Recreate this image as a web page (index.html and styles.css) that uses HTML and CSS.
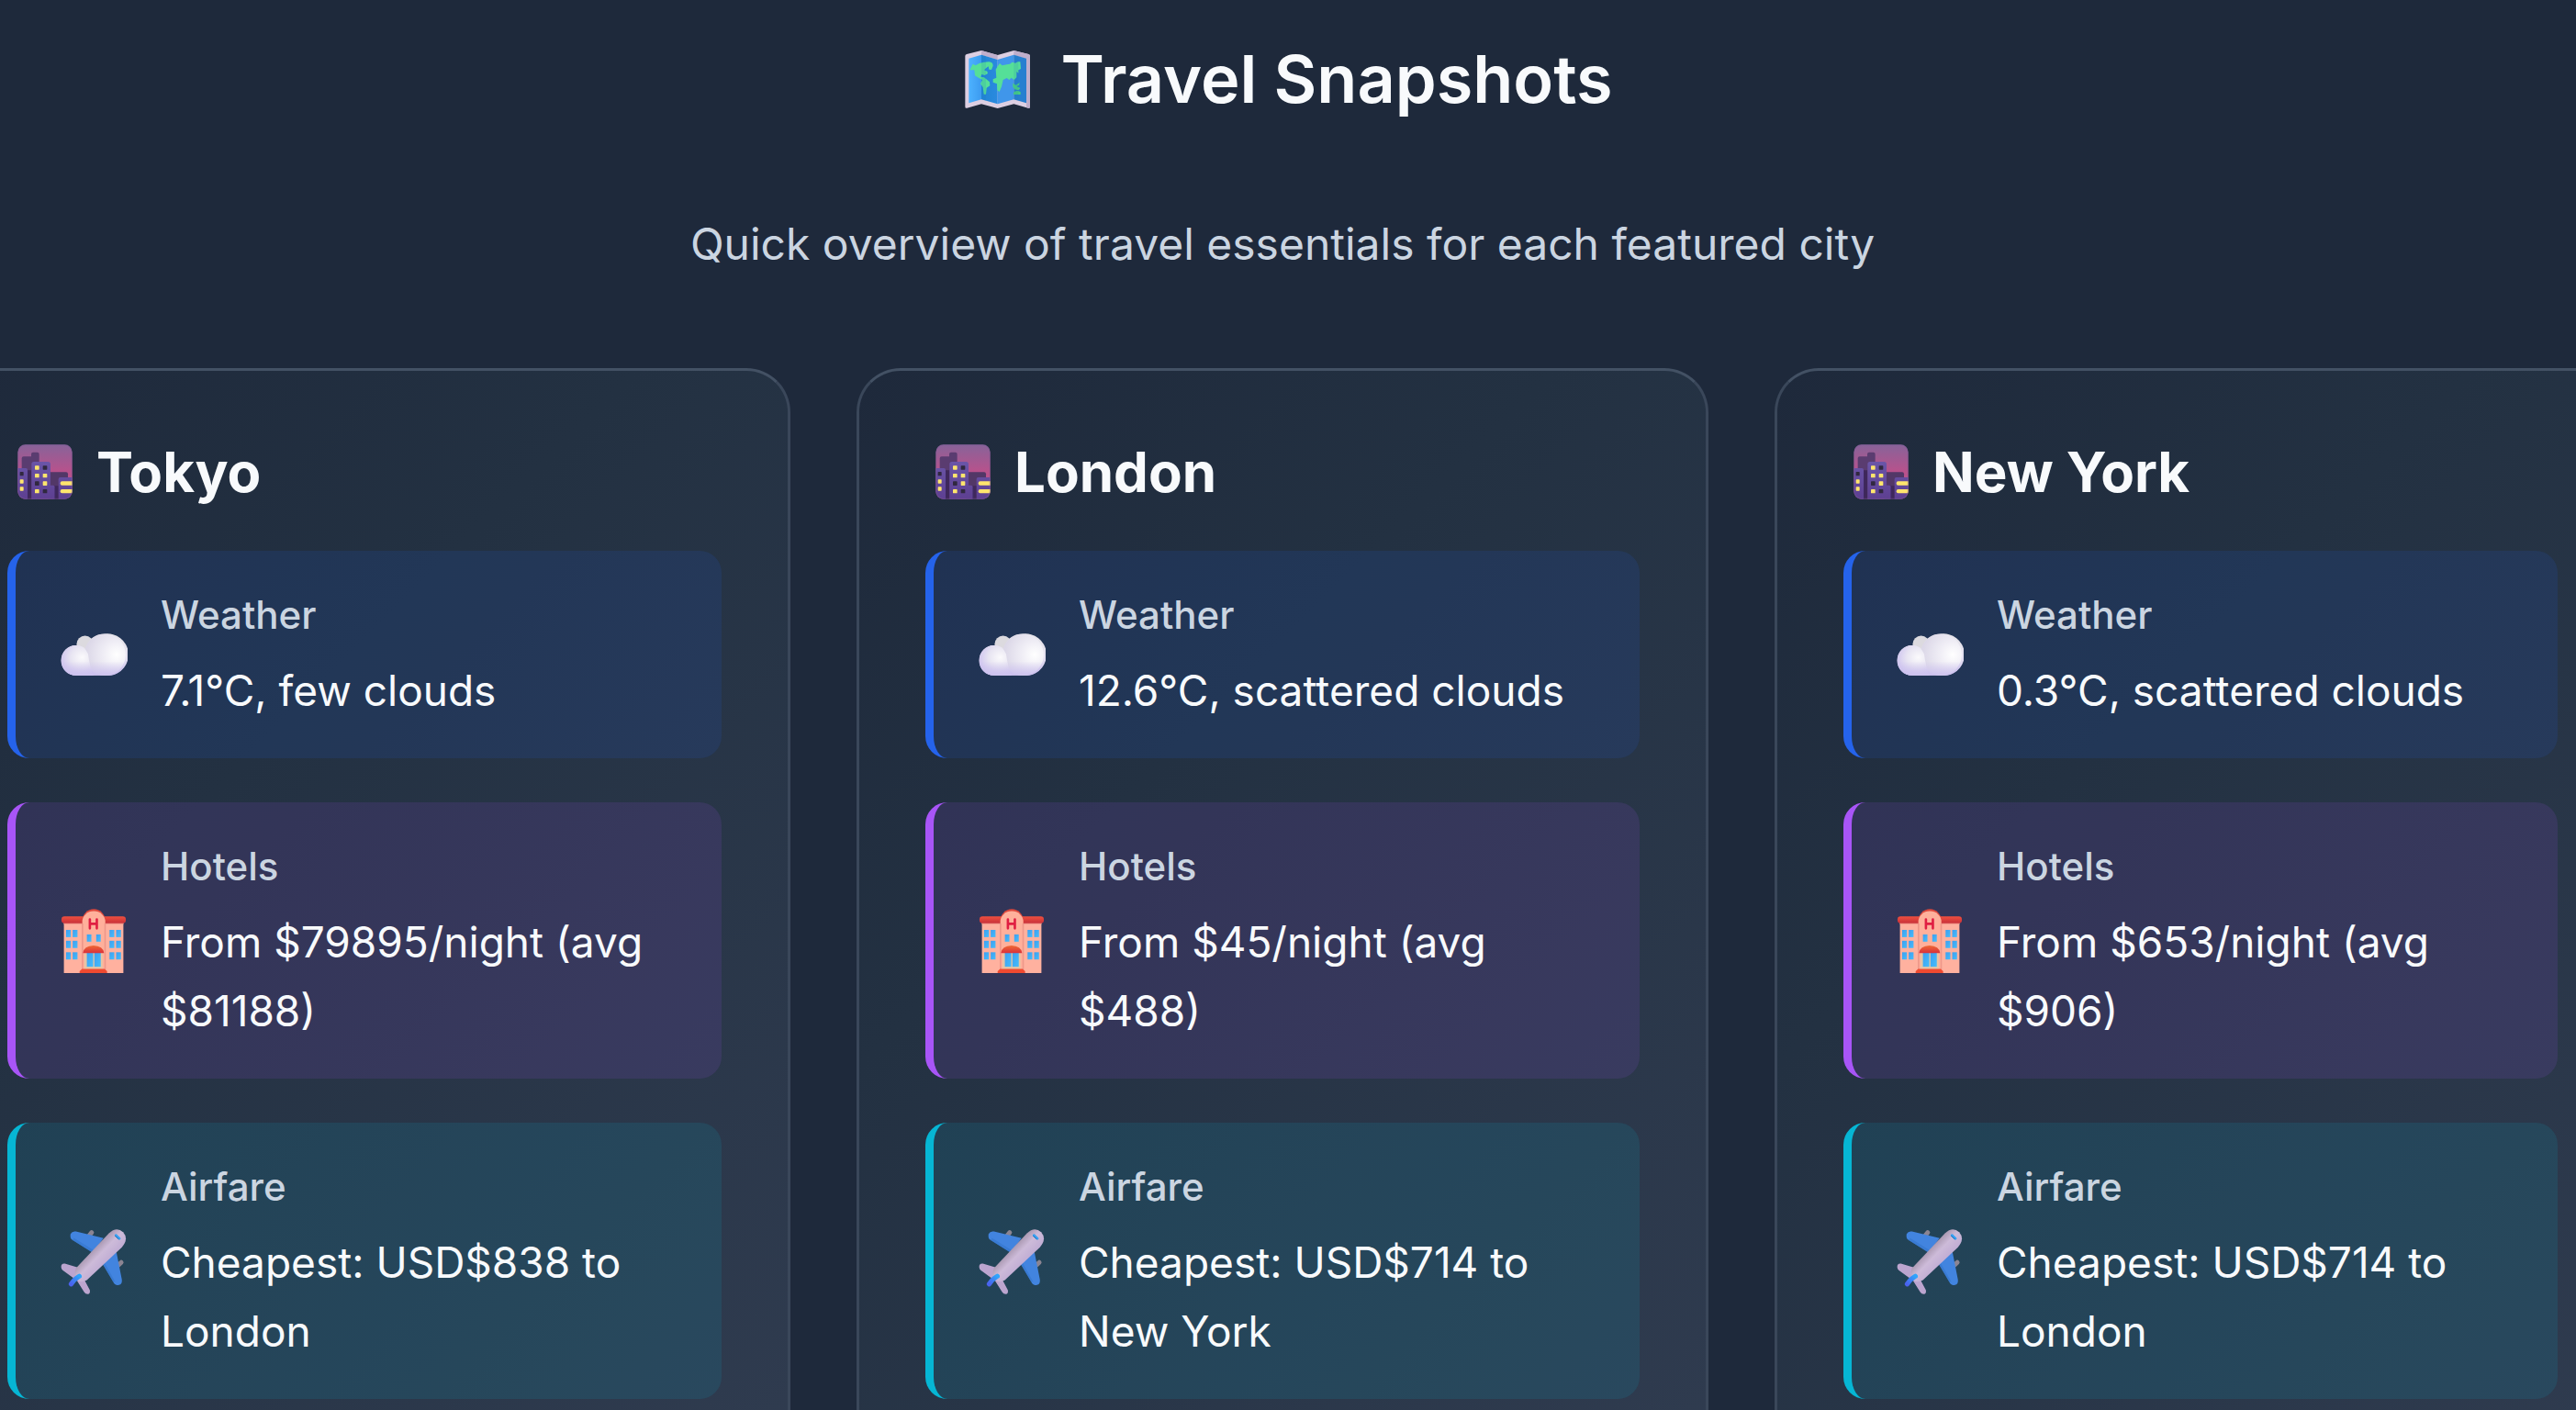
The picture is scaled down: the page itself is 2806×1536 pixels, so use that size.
FILE: index.html
```
<!DOCTYPE html>
<html lang="en">
<head>
    <meta charset="UTF-8">
    <meta name="viewport" content="width=device-width, initial-scale=1.0">
    <title>Travel Snapshots</title>
    <link rel="stylesheet" href="styles.css">
</head>
<body>
    <!-- Shared icons -->
    <svg class="icon-defs" aria-hidden="true">
        <defs>
            <linearGradient id="map-a" x1="0" y1="0" x2="1" y2="0">
                <stop offset="0" stop-color="#4db2ff"/>
                <stop offset="1" stop-color="#3c9bf0"/>
            </linearGradient>
            <linearGradient id="map-b" x1="0" y1="0" x2="1" y2="0">
                <stop offset="0" stop-color="#2185d4"/>
                <stop offset="1" stop-color="#2a8adf"/>
            </linearGradient>
            <linearGradient id="sky" x1="0" y1="0" x2="0" y2="1">
                <stop offset="0" stop-color="#876399"/>
                <stop offset="0.5" stop-color="#b8528c"/>
                <stop offset="1" stop-color="#c04f8a"/>
            </linearGradient>
            <linearGradient id="tower" x1="0" y1="0" x2="0" y2="1">
                <stop offset="0" stop-color="#6a55a8"/>
                <stop offset="1" stop-color="#5d3f91"/>
            </linearGradient>
            <linearGradient id="cloud-base" x1="0" y1="0" x2="0" y2="1">
                <stop offset="0" stop-color="#e6e4e8"/>
                <stop offset="0.55" stop-color="#e5e1f1"/>
                <stop offset="1" stop-color="#cdc2ef"/>
            </linearGradient>
            <radialGradient id="cloud-big" cx="0.78" cy="0.5" r="0.72">
                <stop offset="0" stop-color="#ffffff"/>
                <stop offset="0.45" stop-color="#efedf5"/>
                <stop offset="1" stop-color="#dcd8e8"/>
            </radialGradient>
            <radialGradient id="cloud-small" cx="0.65" cy="0.4" r="0.7">
                <stop offset="0" stop-color="#fbfafc"/>
                <stop offset="0.5" stop-color="#e8e5f2"/>
                <stop offset="1" stop-color="#cdc2ef"/>
            </radialGradient>
            <linearGradient id="cloud-shade" x1="0" y1="0" x2="0" y2="1">
                <stop offset="0" stop-color="#cdc2ef" stop-opacity="0"/>
                <stop offset="1" stop-color="#cdc2ef"/>
            </linearGradient>
            <linearGradient id="roof" x1="0" y1="0" x2="0" y2="1">
                <stop offset="0" stop-color="#f0503e"/>
                <stop offset="1" stop-color="#c8303a"/>
            </linearGradient>
            <linearGradient id="glass" x1="0" y1="0" x2="1" y2="1">
                <stop offset="0" stop-color="#3d9ef0"/>
                <stop offset="1" stop-color="#45bdfb"/>
            </linearGradient>
            <linearGradient id="awning" x1="0" y1="0" x2="0" y2="1">
                <stop offset="0" stop-color="#ef6a35"/>
                <stop offset="1" stop-color="#d92f3c"/>
            </linearGradient>
            <linearGradient id="body" x1="0.35" y1="0.35" x2="0.65" y2="0.65">
                <stop offset="0" stop-color="#a493ab"/>
                <stop offset="0.45" stop-color="#cdbbd9"/>
                <stop offset="1" stop-color="#bfabd3"/>
            </linearGradient>
            <linearGradient id="tail" x1="1" y1="0" x2="0" y2="1">
                <stop offset="0" stop-color="#2fa5fb"/>
                <stop offset="1" stop-color="#4a62ee"/>
            </linearGradient>
        </defs>

        <symbol id="icon-map" viewBox="0 15 216 216">
            <path fill="#ddcfe2" d="M4 48Q4 43 9 42L57 30 110 45 163 30 211 42Q216 43 216 48V214Q216 220 210 218L163 205 110 219 57 205 10 218Q4 220 4 214Z"/>
            <path fill="#bfaecb" d="M57 30 110 45V60L57 45ZM163 30 211 42Q216 43 216 48V214Q216 220 210 218L204 216V57L163 45Z"/>
            <path fill="url(#map-a)" d="M16 56 57 44V190L16 202Z"/>
            <path fill="url(#map-b)" d="M57 44 110 60V205L57 190Z"/>
            <path fill="#4096ea" d="M110 60 163 44V190L110 205Z"/>
            <path fill="#277fd0" d="M163 44 204 56V202L163 190Z"/>
            <path fill="#55df98" d="M19 94 29 74 38 79 50 72 66 68 82 67Q95 68 95 80L90 93 82 92 80 82 72 88 66 94 76 98 78 105 68 111 58 108 54 116 66 118 84 133 85 145 74 152 72 173H65L62 150 54 139 60 126 45 118 36 112 34 94 26 94Z"/>
            <path fill="#55df98" d="M110 82 117 72 125 79 140 76 150 74 158 68 168 71 176 67 184 67 186 90 178 94 178 104 172 99 172 118 164 126 155 119 148 126 140 120 128 126 123 148 116 165 109 160 108 139 95 134 95 124 106 119 104 92Z"/>
            <path fill="#47ce82" d="M160 137 170 143 182 135 180 143 172 147 184 153 178 160 166 157 160 149ZM162 167Q172 157 185 166V174H162Z"/>
            <path fill="#1c6fbe" opacity="0.14" d="M57 44 72 49V194L57 190ZM163 44 178 48V194L163 190Z"/>
        </symbol>

        <symbol id="icon-city" viewBox="0 0 180 180">
            <clipPath id="city-clip"><rect x="1" y="1" width="178" height="178" rx="25"/></clipPath>
            <g clip-path="url(#city-clip)">
                <rect width="180" height="180" fill="url(#sky)"/>
                <path fill="#5a3c70" d="M14 46Q14 40 20 40H45V32Q45 26 51 26H65Q71 26 71 32V180H14Z"/>
                <path fill="#523767" d="M100 91H159Q165 91 165 97V180H100Z"/>
                <path fill="#3f285a" d="M33 85H46V180H30ZM120 136H136V180H118Z"/>
                <path fill="url(#tower)" d="M0 78H27Q33 78 33 84V180H0ZM46 65Q46 57 54 57H100Q108 57 108 65V134H116Q122 134 122 140V180H46ZM134 114Q134 108 140 108H180V180H134Z"/>
                <path fill="#3d2a63" d="M33 84 37 92V180H33ZM122 140 127 148V180H122Z" opacity="0.7"/>
                <g fill="#ffe56d">
                    <rect x="8" y="115" width="12" height="13" rx="2"/><rect x="8" y="139" width="12" height="13" rx="2"/>
                    <rect x="57" y="70" width="14" height="13" rx="2"/><rect x="57" y="96" width="14" height="13" rx="2"/>
                    <rect x="83" y="96" width="14" height="13" rx="2"/><rect x="83" y="121" width="14" height="14" rx="2"/>
                    <rect x="57" y="147" width="14" height="13" rx="2"/>
                    <rect x="140" y="121" width="46" height="13" rx="6"/><rect x="140" y="147" width="46" height="13" rx="6"/>
                </g>
                <g fill="#30283f">
                    <rect x="8" y="90" width="12" height="13" rx="2"/><rect x="83" y="70" width="14" height="13" rx="2"/>
                    <rect x="57" y="121" width="14" height="14" rx="2"/><rect x="83" y="147" width="14" height="13" rx="2"/>
                </g>
                <rect x="2" y="2" width="176" height="176" rx="24" fill="none" stroke="#7b5b98" stroke-width="4" opacity="0.4"/>
            </g>
        </symbol>

        <symbol id="icon-cloud" viewBox="0 0 225 225">
            <circle cx="84" cy="78" r="28" fill="#dcdadf"/>
            <path fill="url(#cloud-base)" d="M53 182A48 50 0 0 1 53 82Q76 82 88 96 98 44 150 44A69 69 0 0 1 167 182Z"/>
            <circle cx="150" cy="113" r="69" fill="url(#cloud-big)"/>
            <path fill="url(#cloud-small)" d="M54 182A49 50 0 0 1 54 82Q82 82 94 110 99 150 112 182Z"/>
            <path fill="url(#cloud-shade)" d="M5 135H217Q205 182 160 182H54Q12 180 5 135Z"/>
        </symbol>

        <symbol id="icon-hotel" viewBox="0 0 225 225">
            <path fill="#ffb19f" d="M14 40H211V219H14Z"/>
            <path fill="#f39a8c" d="M14 50H211V58H14Z"/>
            <rect x="6" y="31" width="213" height="23" rx="10" fill="url(#roof)"/>
            <path fill="#dd493d" d="M75 55V45A38 38 0 0 1 151 45V55Z"/>
            <path fill="#ffb09b" d="M75 219V48A38 34 0 0 1 151 48V219Z"/>
            <path fill="#e2897f" opacity="0.6" d="M73 55H78V208H73ZM148 55H153V208H148Z"/>
            <path fill="none" stroke="#e01e42" stroke-width="8" stroke-linecap="round" d="M100 41V71M123 41V71M100 56H123"/>
            <g fill="url(#glass)">
                <rect x="21" y="76" width="16" height="24"/><rect x="43" y="76" width="16" height="24"/>
                <rect x="165" y="76" width="16" height="24"/><rect x="187" y="76" width="16" height="24"/>
                <rect x="21" y="112" width="16" height="24"/><rect x="43" y="112" width="16" height="24"/>
                <rect x="165" y="112" width="16" height="24"/><rect x="187" y="112" width="16" height="24"/>
                <rect x="21" y="150" width="16" height="24"/><rect x="43" y="150" width="16" height="24"/>
                <rect x="165" y="150" width="16" height="24"/><rect x="187" y="150" width="16" height="24"/>
                <rect x="90" y="91" width="15" height="24"/><rect x="121" y="91" width="15" height="24"/>
            </g>
            <rect x="82" y="148" width="60" height="58" fill="#e6c5a5"/>
            <rect x="90" y="148" width="21" height="50" fill="url(#glass)"/>
            <rect x="115" y="148" width="21" height="50" fill="url(#glass)"/>
            <path fill="url(#awning)" d="M77 153Q80 129 112 128 144 129 147 153Z"/>
            <path fill="#f04a30" d="M66 219V213L74 205H149L157 213V219Z"/>
        </symbol>

        <symbol id="icon-plane" viewBox="0 0 225 225">
            <path fill="none" stroke="#8b8492" stroke-width="15" stroke-linecap="round" d="M97 28 106 17M195 125 204 116"/>
            <path fill="#4284df" d="M36 22Q42 11 54 14L145 36 110 84 42 42Q33 36 36 22ZM188 82 206 173Q208 188 196 191 183 194 177 180L141 119Z"/>
            <path fill="#3475cb" opacity="0.6" d="M42 42 110 84 114 77 48 36ZM141 119 177 180 184 180 146 113Z"/>
            <path fill="#bca5cf" d="M5 132Q4 119 17 120L68 135 80 170 100 208Q102 220 93 221 85 221 81 214L57 176 10 142Q6 139 5 132Z"/>
            <path fill="url(#body)" d="M54 135 163 20Q188-4 210 16 230 38 206 66L90 175Q70 186 57 174 45 158 54 135Z"/>
            <path fill="none" stroke="#36a0f2" stroke-width="8" stroke-linecap="round" d="M186 26 198 37"/>
            <path fill="none" stroke="#1d70b8" stroke-width="3" stroke-linecap="round" d="M184 29 195 39"/>
            <path fill="none" stroke="url(#tail)" stroke-width="16" stroke-linecap="round" d="M65 162Q50 170 38 188"/>
        </symbol>
    </svg>

    <section class="snapshots">
        <header class="section-header">
            <h1><svg class="title-icon" aria-hidden="true"><use href="#icon-map"/></svg>Travel Snapshots</h1>
            <p>Quick overview of travel essentials for each featured city</p>
        </header>

        <div class="city-grid">
            <article class="city-card">
                <h2><svg class="city-icon" aria-hidden="true"><use href="#icon-city"/></svg>Tokyo</h2>
                <div class="info-item weather">
                    <svg class="info-icon" aria-hidden="true"><use href="#icon-cloud"/></svg>
                    <div class="info-text">
                        <h3>Weather</h3>
                        <p>7.1°C, few clouds</p>
                    </div>
                </div>
                <div class="info-item hotels">
                    <svg class="info-icon" aria-hidden="true"><use href="#icon-hotel"/></svg>
                    <div class="info-text">
                        <h3>Hotels</h3>
                        <p>From $79895/night (avg $81188)</p>
                    </div>
                </div>
                <div class="info-item airfare">
                    <svg class="info-icon" aria-hidden="true"><use href="#icon-plane"/></svg>
                    <div class="info-text">
                        <h3>Airfare</h3>
                        <p>Cheapest: USD$838 to London</p>
                    </div>
                </div>
            </article>

            <article class="city-card">
                <h2><svg class="city-icon" aria-hidden="true"><use href="#icon-city"/></svg>London</h2>
                <div class="info-item weather">
                    <svg class="info-icon" aria-hidden="true"><use href="#icon-cloud"/></svg>
                    <div class="info-text">
                        <h3>Weather</h3>
                        <p>12.6°C, scattered clouds</p>
                    </div>
                </div>
                <div class="info-item hotels">
                    <svg class="info-icon" aria-hidden="true"><use href="#icon-hotel"/></svg>
                    <div class="info-text">
                        <h3>Hotels</h3>
                        <p>From $45/night (avg $488)</p>
                    </div>
                </div>
                <div class="info-item airfare">
                    <svg class="info-icon" aria-hidden="true"><use href="#icon-plane"/></svg>
                    <div class="info-text">
                        <h3>Airfare</h3>
                        <p>Cheapest: USD$714 to New York</p>
                    </div>
                </div>
            </article>

            <article class="city-card">
                <h2><svg class="city-icon" aria-hidden="true"><use href="#icon-city"/></svg>New York</h2>
                <div class="info-item weather">
                    <svg class="info-icon" aria-hidden="true"><use href="#icon-cloud"/></svg>
                    <div class="info-text">
                        <h3>Weather</h3>
                        <p>0.3°C, scattered clouds</p>
                    </div>
                </div>
                <div class="info-item hotels">
                    <svg class="info-icon" aria-hidden="true"><use href="#icon-hotel"/></svg>
                    <div class="info-text">
                        <h3>Hotels</h3>
                        <p>From $653/night (avg $906)</p>
                    </div>
                </div>
                <div class="info-item airfare">
                    <svg class="info-icon" aria-hidden="true"><use href="#icon-plane"/></svg>
                    <div class="info-text">
                        <h3>Airfare</h3>
                        <p>Cheapest: USD$714 to London</p>
                    </div>
                </div>
            </article>
        </div>
    </section>
</body>
</html>
```

FILE: styles.css
```
* {
    margin: 0;
    padding: 0;
    box-sizing: border-box;
}

body {
    font-family: Inter, "Liberation Sans", sans-serif;
    background-color: #1e293b;
    color: #f8fafc;
    height: 100vh;
    overflow: hidden;
}

.icon-defs {
    position: absolute;
    width: 0;
    height: 0;
}

/* The row of cards runs past both edges of the window */
.snapshots {
    margin: 0 -55px 0 -67px;
    padding-top: 28px;
}

.section-header {
    text-align: center;
    margin-bottom: 97px;
}

.section-header h1 {
    display: flex;
    align-items: center;
    justify-content: center;
    gap: 34px;
    padding-left: 12px;
    font-size: 72px;
    font-weight: 600;
    line-height: 116px;
    margin-bottom: 84px;
}

.section-header p {
    font-size: 48px;
    line-height: 76px;
    color: #cbd5e1;
}

.title-icon {
    width: 72px;
    height: 72px;
}

.city-grid {
    display: grid;
    grid-template-columns: repeat(3, 1fr);
    gap: 72px;
}

.city-card {
    padding: 72px;
    border: 3px solid #3a475a;
    border-top-color: #435164;
    border-radius: 48px;
    background: linear-gradient(135deg, #1e293b, #233142 35%, #303c50);
}

.city-card h2 {
    display: flex;
    align-items: center;
    gap: 26px;
    padding-left: 11px;
    font-size: 60px;
    font-weight: 700;
    line-height: 76px;
    margin-bottom: 48px;
}

.city-icon {
    width: 60px;
    height: 60px;
}

.info-item {
    display: flex;
    align-items: center;
    gap: 36px;
    padding: 36px 48px;
    border-left: 9px solid;
    border-radius: 24px;
    margin-bottom: 48px;
}

.info-icon {
    width: 74px;
    height: 74px;
    flex-shrink: 0;
}

.info-text h3 {
    font-size: 42px;
    font-weight: 500;
    line-height: 67px;
    margin-bottom: 12px;
    color: #cbd5e1;
}

.info-text p {
    font-size: 46px;
    line-height: 75px;
}

.weather {
    border-left-color: #2563eb;
    background-color: rgba(37, 99, 235, 0.12);
}

.hotels {
    border-left-color: #a855f7;
    background-color: rgba(168, 85, 247, 0.12);
}

.airfare {
    border-left-color: #06b6d4;
    background-color: rgba(6, 182, 212, 0.12);
}
```
